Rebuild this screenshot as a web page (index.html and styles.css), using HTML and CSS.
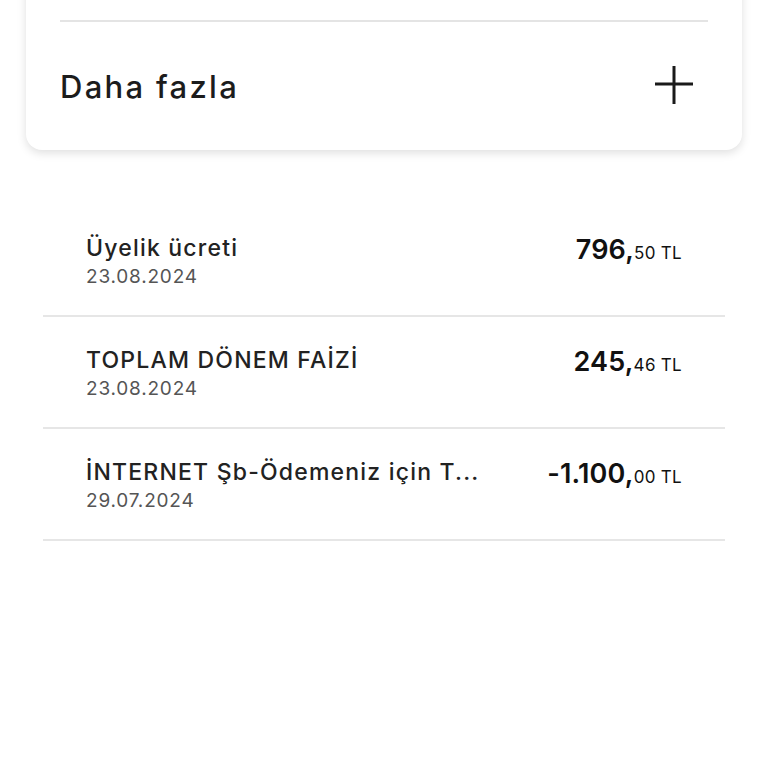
FILE: index.html
```html
<!DOCTYPE html>
<html lang="tr">
<head>
<meta charset="utf-8">
<link rel="stylesheet" href="styles.css">
</head>
<body>
<div class="card">
  <div class="card-top"></div>
  <div class="more-row">
    <span class="more-label">Daha fazla</span>
    <svg class="plus" width="40" height="40" viewBox="0 0 40 40">
      <path d="M20 1 V39 M1 19 H39" stroke="#1a1a1a" stroke-width="3" fill="none"/>
    </svg>
  </div>
</div>
<div class="list">
  <div class="item">
    <div class="info">
      <div class="title">Üyelik ücreti</div>
      <div class="date">23.08.2024</div>
    </div>
    <div class="amount"><span class="big">796,</span><span class="small">50 TL</span></div>
  </div>
  <div class="item">
    <div class="info">
      <div class="title">TOPLAM DÖNEM FAİZİ</div>
      <div class="date">23.08.2024</div>
    </div>
    <div class="amount"><span class="big">245,</span><span class="small">46 TL</span></div>
  </div>
  <div class="item">
    <div class="info">
      <div class="title">İNTERNET Şb-Ödemeniz için T...</div>
      <div class="date">29.07.2024</div>
    </div>
    <div class="amount"><span class="big">-1.100,</span><span class="small">00 TL</span></div>
  </div>
</div>
</body>
</html>
```
FILE: styles.css
```css
html, body {
  margin: 0;
  padding: 0;
  background: #fff;
}
body {
  font-family: "Inter", "Noto Sans", sans-serif;
  color: #1c1c1c;
  width: 768px;
  height: 768px;
  overflow: hidden;
}
.card {
  margin: -40px 26px 0;
  padding: 0 34px;
  background: #fff;
  border-radius: 0 0 16px 16px;
  box-shadow: 0 3px 10px rgba(0,0,0,0.13);
}
.card-top {
  height: 60px;
  border-bottom: 2px solid #e4e4e4;
}
.more-row {
  height: 128px;
  display: flex;
  align-items: center;
  justify-content: space-between;
}
.more-label {
  font-size: 31px;
  font-weight: 500;
  color: #1c1c1c;
  letter-spacing: 2.3px;
}
.plus {
  margin-right: 14px;
  margin-top: -2px;
}
.list {
  margin: 55px 43px 0;
}
.item {
  height: 110px;
  border-bottom: 2px solid #e6e6e6;
  padding: 0 43px;
  display: flex;
  align-items: flex-start;
  justify-content: space-between;
}
.info {
  padding-top: 28px;
}
.title {
  font-size: 23px;
  font-weight: 500;
  color: #222;
  line-height: 30px;
  letter-spacing: 1.2px;
}
.date {
  font-size: 19px;
  color: #555;
  line-height: 27px;
  letter-spacing: 0.8px;
}
.amount {
  padding-top: 28px;
  white-space: nowrap;
}
.big {
  font-size: 27px;
  font-weight: 600;
  color: #111;
  letter-spacing: 0.2px;
}
.small {
  font-size: 17px;
  color: #111;
  letter-spacing: 0.3px;
}
```
